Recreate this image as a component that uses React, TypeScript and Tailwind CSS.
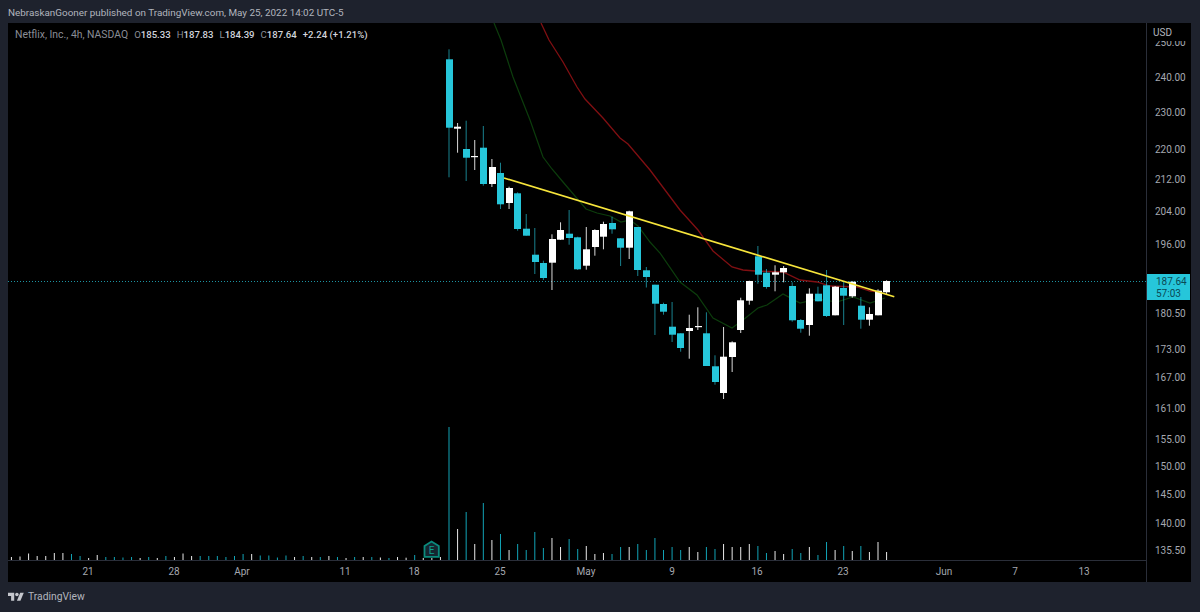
const UP = "#ffffff";
const DOWN = "#26c6da";

// [isUp, wickTop, bodyTop, bodyBottom, wickBottom]
const candles: [number, number, number, number, number][] = [
  [0, 49.3, 59.3, 127.7, 177.3], [1, 123, 126.7, 128.7, 152.7], [0, 120.7, 149, 157.7, 181], [1, 140, 156, 157.2, 170],
  [0, 126, 147.7, 184, 185.7], [1, 159, 167, 184, 187], [0, 162.7, 173, 204.3, 209], [1, 186.7, 188, 203, 209],
  [0, 192.3, 193.3, 229, 230.7], [0, 214, 228.7, 235.7, 235.7], [0, 228, 254.7, 262, 274], [0, 260.7, 263, 278, 280],
  [1, 234.3, 239, 262.7, 290], [1, 222.3, 230, 239.7, 240], [0, 210, 233.7, 238, 244.7], [0, 236.7, 237.3, 269.3, 270],
  [1, 227, 249.3, 265.7, 269.7], [1, 229.3, 230, 247, 255.7], [1, 221.7, 224, 236.7, 249.3], [0, 216.7, 223, 229.3, 233.7],
  [0, 238, 238.3, 247.7, 266], [1, 210.7, 211.3, 247.7, 259], [0, 227, 227, 270, 276], [0, 267, 270.3, 277, 287.5],
  [0, 284.7, 284.7, 303.7, 335], [0, 302.7, 304, 311.7, 314.7], [0, 302, 326.7, 334.7, 342], [0, 333.3, 333.3, 348, 351.7],
  [1, 314.7, 328, 331, 358.7], [1, 307.3, 326, 327.2, 330], [0, 312.3, 333.3, 366, 366], [0, 355.3, 366.3, 382, 384.7],
  [1, 327, 356.7, 393, 399], [1, 341.3, 342.3, 357, 372], [1, 297.7, 300.3, 330, 333], [1, 280.7, 281, 300.7, 304.7],
  [0, 246, 256.3, 274.7, 283.7], [0, 269, 272.7, 287, 288.7], [1, 265.3, 272.3, 274.7, 291.3], [1, 266, 268, 272.3, 282.3],
  [0, 282.3, 286, 320.3, 321.7], [0, 319, 320, 328.7, 332.7], [1, 288.3, 293.7, 325, 335.7], [0, 286.7, 293.7, 301.3, 301.3],
  [0, 270, 285.3, 316, 317], [1, 286, 286.7, 315.3, 315.3], [0, 281.7, 288, 295.7, 325], [1, 281.3, 281.7, 296.3, 297.7],
  [0, 297, 305.7, 319.7, 328.7], [1, 307.3, 314, 319.7, 325.7], [1, 289.3, 290.7, 315.3, 315.3], [1, 280.3, 281, 292.3, 294],
];

// [isUp, height], one per bar, from the left edge to the last candle
const volume: [number, number][] = [
  [0, 3], [1, 3], [1, 3.5], [1, 6.5], [1, 4], [1, 4], [1, 7], [1, 7], [0, 6], [0, 4], [1, 2], [1, 5], [0, 3], [0, 3], [0, 2.5], [0, 3], [1, 2], [0, 3], [1, 2], [0, 4],
  [1, 3], [1, 6.5], [1, 4], [0, 4], [0, 4], [0, 4], [0, 3], [0, 4], [0, 6], [1, 6], [0, 4.5], [0, 4.5], [0, 2.5], [0, 4.5], [1, 3], [0, 4], [1, 3], [0, 3],
  [1, 4], [0, 3], [1, 2], [0, 3], [1, 3], [0, 3], [1, 2.5], [0, 2], [1, 3], [1, 2.3], [0, 5], [1, 2], [1, 2], [1, 3],
  [0, 133], [1, 31], [0, 48], [1, 16], [0, 57], [1, 20], [0, 26], [1, 10], [0, 16], [0, 10], [0, 28], [0, 12], [1, 22], [1, 13], [0, 21], [0, 11], [1, 14], [1, 6],
  [1, 7], [0, 6], [0, 13], [1, 13], [0, 16], [0, 10], [0, 22], [0, 10], [0, 13], [0, 10], [1, 13], [1, 8], [0, 13], [0, 11], [1, 16], [1, 13], [1, 13], [1, 16],
  [0, 14], [0, 7], [1, 9], [1, 6], [0, 11], [0, 7], [1, 13], [0, 5], [0, 18], [1, 10], [0, 14], [1, 9], [0, 14], [1, 8], [1, 18], [1, 8],
];

const redLine =
  "541,23 549,40 563,62 577,87 585,99 603,118 620,138 628,144 650,170 680,210 698,230 713,251 732,267 743,270 755,271 783,272 800,280 817,282 830,286 857,287 870,291 882,292";
const greenLine =
  "494,23 501,40 513,77 530,120 543,157 552,169 563,182 586,209 597,213 610,216 621,222 630,220 638,226 650,242 660,253 680,282 697,295 713,318 732,328 743,320 758,308 767,305 783,294 800,303 817,299 837,302 853,297 870,303 885,298";

const prices = [
  ["250.00", 43], ["240.00", 77.5], ["230.00", 113], ["220.00", 150], ["212.00", 180], ["204.00", 212], ["196.00", 245],
  ["180.50", 314], ["173.00", 350], ["167.00", 378], ["161.00", 409], ["155.00", 440], ["150.00", 467], ["145.00", 495], ["140.00", 524], ["135.50", 551],
] as const;

const dates = [
  ["21", 88], ["28", 174], ["Apr", 242], ["11", 345], ["18", 414], ["25", 500], ["May", 586], ["9", 672], ["16", 757], ["23", 843], ["Jun", 944], ["7", 1015], ["13", 1084],
] as const;

const candleX = (i: number) => 449 + 8.58 * i;

function Chart() {
  return (
    <svg className="block h-[537px] w-[1138px]" viewBox="8 23 1138 537" width="1138" height="537">
      <line x1="8" x2="1146" y1="281.5" y2="281.5" stroke="#26c6da" strokeOpacity="0.75" strokeDasharray="1 2" />
      <polyline points={greenLine} fill="none" stroke="#0c3d0c" strokeWidth="1.2" />
      <polyline points={redLine} fill="none" stroke="#800f12" strokeWidth="1.3" />
      {volume.map(([up, h], i) => {
        const x = 449 + 8.58 * (i - 52);
        return <rect key={i} x={x - 0.5} y={560 - h} width="1" height={h} fill={up ? "#e8e8e8" : "#12a3b5"} />;
      })}
      {candles.map(([up, wt, bt, bb, wb], i) => {
        const x = candleX(i);
        const color = up ? UP : DOWN;
        return (
          <g key={i}>
            <rect x={x - 0.5} y={wt} width="1" height={wb - wt} fill={color} fillOpacity={up ? 0.85 : 0.65} />
            <rect x={Math.round(x - 3.3)} y={bt} width="7" height={bb - bt} fill={color} />
          </g>
        );
      })}
      <line x1="504" y1="178" x2="894.3" y2="296.7" stroke="#f7e53b" strokeWidth="1.7" />
      <path d="M431.5 541.5 L438.8 546 V556.8 H424.5 V546 Z" fill="#152630" stroke="#0b8a7c" strokeWidth="1.8" />
      <text x="431.6" y="554" textAnchor="middle" fontSize="10" fontFamily="Roboto, sans-serif" fill="#0fa08e">E</text>
    </svg>
  );
}

export default function App() {
  return (
    <div className="flex h-[612px] w-[1200px] flex-col overflow-hidden bg-[#1e222d] font-['Roboto',sans-serif] text-[#b2b5be]">
      <div className="flex h-[23px] items-center pl-2 pt-[2px] text-[9.9px] leading-none">
        NebraskanGooner published on TradingView.com, May 25, 2022 14:02 UTC-5
      </div>
      <div className="ml-2 mr-[9px] flex h-[559px] bg-black">
        <div className="relative flex w-[1138px] flex-col">
          <div className="absolute left-[7px] top-[5px] flex whitespace-pre text-[9.6px] leading-[14px] text-[#8a8d96]">
            <span className="text-[10.4px]">Netflix, Inc., 4h, NASDAQ</span>
            <span className="ml-[6px]">O<b className="font-medium text-[#d1d4dc]">185.33</b></span>
            <span className="ml-[6px]">H<b className="font-medium text-[#d1d4dc]">187.83</b></span>
            <span className="ml-[6px]">L<b className="font-medium text-[#d1d4dc]">184.39</b></span>
            <span className="ml-[6px]">C<b className="font-medium text-[#d1d4dc]">187.64</b></span>
            <span className="ml-[6px] font-medium text-[#d1d4dc]">+2.24 (+1.21%)</span>
          </div>
          <Chart />
          <div className="relative h-[22px] border-t border-[#2a2e39] text-[10px]">
            {dates.map(([label, x]) => (
              <span key={label} className="absolute top-[3px] -translate-x-1/2 text-[#a5a8b0]" style={{ left: x - 8 }}>
                {label}
              </span>
            ))}
          </div>
        </div>
        <div className="relative flex w-[45px] flex-col border-l border-[#2a2e39] text-[10px] leading-none">
          <div className="h-[18px] pl-[6px] pt-[5px] text-[#b2b5be]">USD</div>
          <div className="relative flex-1 overflow-hidden">
            {prices.map(([label, y]) => (
              <span key={label} className="absolute left-[8px] -translate-y-1/2 text-[#a5a8b0]" style={{ top: y - 41 }}>
                {label}
              </span>
            ))}
          </div>
          <div className="absolute left-0 top-[251px] flex h-[26px] w-[43px] flex-col justify-center gap-[1px] bg-[#26c6da] pl-[9px] text-[10px] leading-[11px] text-[#0b4a55]">
            <span>187.64</span>
            <span>57:03</span>
          </div>
        </div>
      </div>
      <div className="flex flex-1 items-center gap-1 pl-2 text-[10.3px] text-[#b2b5be]">
        <svg width="16" height="12.5" viewBox="0 0 36 28" fill="#c4c6cc">
          <path d="M14 22H7V11H0V4h14v18zM28 22h-8l7.5-18h8L28 22z" />
          <circle cx="20" cy="8" r="4" />
        </svg>
        <span>TradingView</span>
      </div>
    </div>
  );
}
